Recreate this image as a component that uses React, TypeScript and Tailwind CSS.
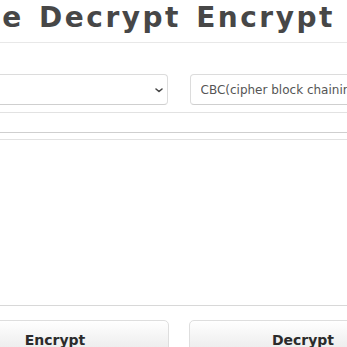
import { ChangeEvent, useState } from 'react';

const MODES = [
  'ECB(electronic codebook)',
  'CBC(cipher block chaining)',
  'CFB(cipher feedback)',
  'OFB(output feedback)',
  'CTR(counter)',
];

function Chevron() {
  return (
    <svg
      className="pointer-events-none absolute right-[4px] top-1/2 -translate-y-1/2"
      width="10"
      height="8"
      viewBox="0 0 10 8"
      fill="none"
    >
      <path d="M2 3l3 2.5L8 3" stroke="#444" strokeWidth="1.6" strokeLinecap="round" strokeLinejoin="round" />
    </svg>
  );
}

export default function App() {
  const [padding, setPadding] = useState('');
  const [mode, setMode] = useState(MODES[1]);
  const [key, setKey] = useState('');
  const [text, setText] = useState('');

  return (
    <div className="w-[347px] h-[347px] overflow-hidden bg-white font-['DejaVu_Sans',Verdana,sans-serif]">
      {/* titulo */}
      <div className="h-[43px] border-b border-[#e8e8e8] pt-[4px] overflow-hidden">
        <h1 className="-ml-[93px] whitespace-nowrap text-[28px] leading-none font-bold tracking-[2.5px] [word-spacing:3px] text-[#474747]">
          Online Decrypt Encrypt Tool
        </h1>
      </div>

      {/* modo / padding */}
      <div className="mt-[31px] flex gap-[22px] -ml-[190px] -mr-[200px]">
        <div className="relative flex-1">
          <select
            value={padding}
            onChange={(e: ChangeEvent<HTMLSelectElement>) => setPadding(e.target.value)}
            className="block w-full h-[31px] appearance-none rounded-[4px] border border-[#dcdcdc] border-b-[#cfcfcf] bg-white pl-[10px] text-[12px] text-[#555] outline-none"
          >
            <option value=""></option>
            <option value="pkcs5">pkcs5padding</option>
            <option value="zero">zeropadding</option>
          </select>
          <Chevron />
        </div>
        <div className="relative flex-1">
          <select
            value={mode}
            onChange={(e: ChangeEvent<HTMLSelectElement>) => setMode(e.target.value)}
            className="block w-full h-[31px] appearance-none rounded-[4px] border border-[#dcdcdc] border-b-[#cfcfcf] bg-white pl-[10px] text-[12px] text-[#555] outline-none"
          >
            {MODES.map((m) => (
              <option key={m} value={m}>
                {m}
              </option>
            ))}
          </select>
          <Chevron />
        </div>
      </div>

      {/* clave */}
      <input
        value={key}
        onChange={(e) => setKey(e.target.value)}
        className="block -ml-[10px] w-[367px] mt-[7px] h-[21px] border border-[#e2e2e2] border-b-[#cfcfcf] bg-white text-[12px] outline-none"
      />

      {/* texto */}
      <textarea
        value={text}
        onChange={(e) => setText(e.target.value)}
        className="block -ml-[10px] w-[367px] mt-[6px] h-[167px] resize-none border border-[#e2e2e2] border-b-[#d8d8d8] bg-white text-[12px] outline-none"
      />

      {/* botones */}
      <div className="mt-[14px] flex gap-[20px] -ml-[59px] w-[476px]">
        <button className="w-[228px] h-[40px] shrink-0 rounded-[5px] border border-[#dedede] bg-gradient-to-b from-white to-[#e6e6e6] text-[14px] font-bold text-[#2b2b2b]">
          Encrypt
        </button>
        <button className="w-[228px] h-[40px] shrink-0 rounded-[5px] border border-[#dedede] bg-gradient-to-b from-white to-[#e6e6e6] text-[14px] font-bold text-[#2b2b2b]">
          Decrypt
        </button>
      </div>
    </div>
  );
}
